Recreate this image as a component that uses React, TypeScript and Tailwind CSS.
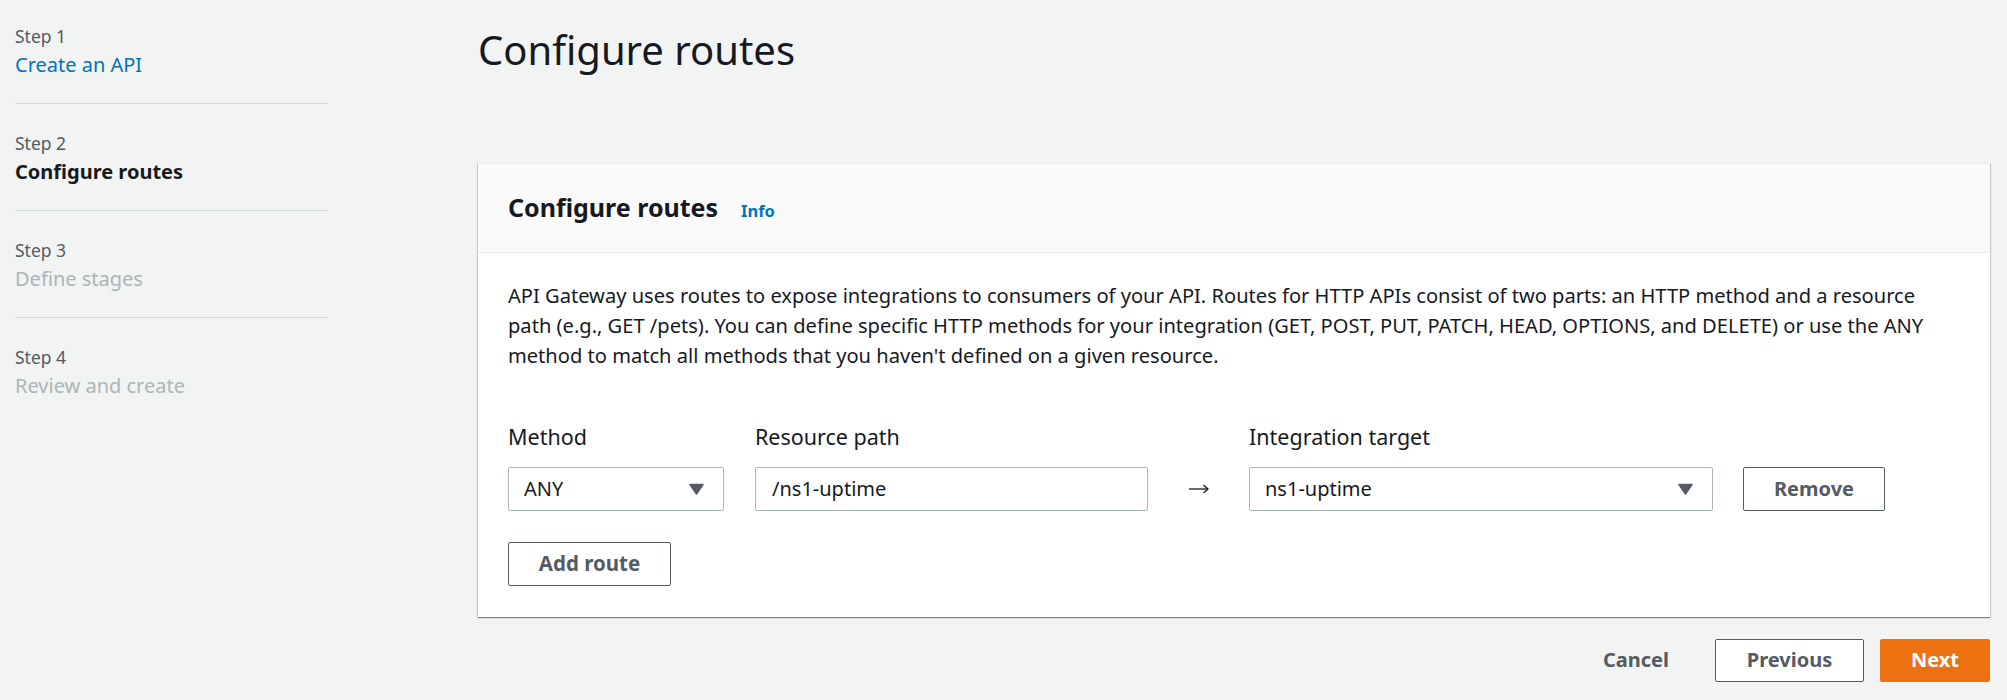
import { useState } from 'react'

const steps = [
  { label: 'Step 1', title: 'Create an API', state: 'done' },
  { label: 'Step 2', title: 'Configure routes', state: 'current' },
  { label: 'Step 3', title: 'Define stages', state: 'todo' },
  { label: 'Step 4', title: 'Review and create', state: 'todo' },
]

function Caret() {
  return (
    <svg width="15" height="12" viewBox="0 0 15 12" className="shrink-0">
      <path d="M1 1.5 L14 1.5 L7.5 11 Z" fill="#545b64" stroke="#545b64" strokeWidth="1.5" strokeLinejoin="round" />
    </svg>
  )
}

function Arrow() {
  return (
    <svg width="20" height="10" viewBox="0 0 20 10" fill="none" stroke="#16191f" strokeWidth="1.3">
      <path d="M0 5 H19" />
      <path d="M14.5 1 L19 5 L14.5 9" />
    </svg>
  )
}

export default function App() {
  const [path, setPath] = useState('/ns1-uptime')

  return (
    <div
      className="flex min-h-[700px] w-full bg-[#f2f3f3] text-[#16191f]"
      style={{ fontFamily: '"Noto Sans", "Open Sans", sans-serif' }}
    >
      {/* wizard steps */}
      <nav className="w-[478px] shrink-0 pl-[15px] pt-[22px]">
        <ul className="w-[313px]">
          {steps.map((s, i) => (
            <li key={s.label}>
              <div className="text-[17.5px] leading-[28px] text-[#545b64]">{s.label}</div>
              <div
                className={`text-[20px] leading-[30px] ${
                  s.state === 'done' ? 'text-[#0073bb]' : s.state === 'current' ? 'font-bold text-[#16191f]' : 'text-[#aab7b8]'
                }`}
              >
                {s.title}
              </div>
              {i < steps.length - 1 && <div className="mt-[23px] mb-[25px] h-px bg-[#d5dbdb]" />}
            </li>
          ))}
        </ul>
      </nav>

      <main className="flex-1 pr-[17px]">
        <h1 className="mt-[26px] text-[40px] leading-[48px] font-normal">Configure routes</h1>

        <section className="mt-[89px] bg-white shadow-[0_1px_1px_0_rgba(0,28,36,0.3),1px_1px_1px_0_rgba(0,28,36,0.15),-1px_1px_1px_0_rgba(0,28,36,0.15)] border-t border-[#eaeded]">
          <div className="flex items-baseline border-b border-[#eaeded] bg-[#fafafa] px-[30px] py-[28px]">
            <h2 className="text-[25px] leading-[30px] font-bold">Configure routes</h2>
            <a className="ml-[23px] text-[16.5px] font-bold text-[#0073bb]">Info</a>
          </div>

          <div className="pl-[30px] pr-[36px] pt-[28px] pb-[31px]">
            <p className="text-[20.1px] leading-[30px]">
              API Gateway uses routes to expose integrations to consumers of your API. Routes for HTTP APIs consist of two
              parts: an HTTP method and a resource path (e.g., GET /pets). You can define specific HTTP methods for your
              integration (GET, POST, PUT, PATCH, HEAD, OPTIONS, and DELETE) or use the ANY method to match all methods that
              you haven't defined on a given resource.
            </p>

            <div className="mt-[51px] flex items-end">
              <div className="w-[216px] shrink-0">
                <label className="mb-[15px] block text-[21.5px] leading-[30px]">Method</label>
                <div className="flex h-[44px] items-center justify-between rounded-[2px] border border-[#aab7b8] bg-white pl-[15px] pr-[19px] text-[20px]">
                  <span>ANY</span>
                  <Caret />
                </div>
              </div>

              <div className="ml-[31px] w-[393px] shrink-0">
                <label className="mb-[15px] block text-[21.5px] leading-[30px]">Resource path</label>
                <input
                  value={path}
                  onChange={(e) => setPath(e.target.value)}
                  className="h-[44px] w-full rounded-[2px] border border-[#aab7b8] bg-white px-[16px] text-[20px] outline-none"
                />
              </div>

              <div className="flex h-[44px] w-[101px] shrink-0 items-center justify-center">
                <Arrow />
              </div>

              <div className="w-[464px] shrink-0">
                <label className="mb-[15px] block text-[21.5px] leading-[30px]">Integration target</label>
                <div className="flex h-[44px] items-center justify-between rounded-[2px] border border-[#aab7b8] bg-white pl-[15px] pr-[19px] text-[20px]">
                  <span>ns1-uptime</span>
                  <Caret />
                </div>
              </div>

              <button className="ml-[30px] h-[44px] w-[142px] shrink-0 rounded-[2px] border border-[#545b64] bg-white text-[20px] font-bold text-[#545b64]">
                Remove
              </button>
            </div>

            <button className="mt-[31px] h-[44px] w-[163px] rounded-[2px] border border-[#545b64] bg-white text-[20.5px] font-bold text-[#545b64]">
              Add route
            </button>
          </div>
        </section>

        <div className="mt-[22px] flex items-center justify-end">
          <button className="mr-[46px] h-[43px] text-[20px] font-bold text-[#545b64]">Cancel</button>
          <button className="h-[43px] w-[149px] rounded-[2px] border border-[#545b64] bg-white text-[20px] font-bold text-[#545b64]">
            Previous
          </button>
          <button className="ml-[16px] h-[43px] w-[110px] rounded-[2px] bg-[#ec7211] text-[20px] font-bold text-white">
            Next
          </button>
        </div>
      </main>
    </div>
  )
}
